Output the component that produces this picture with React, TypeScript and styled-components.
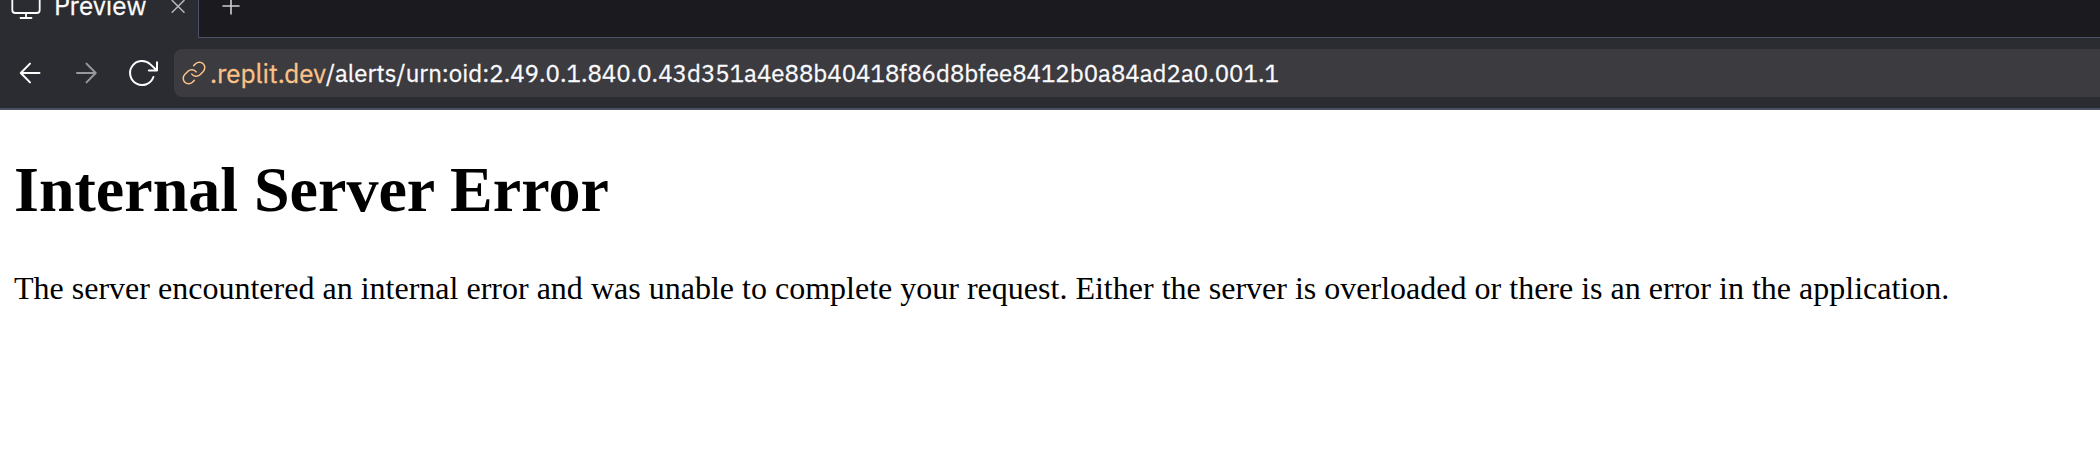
import React from "react";
import styled, { createGlobalStyle } from "styled-components";

const Global = createGlobalStyle`
  * { box-sizing: border-box; }
  body { margin: 0; background: #fff; overflow: hidden; }
`;
const Page = styled.div`height: 454px; display: flex; flex-direction: column;`;
const TabBar = styled.div`height: 38px; flex: none; display: flex; background: #2b2c31;`;
const Tab = styled.div`
  width: 198px; height: 38px; display: flex; align-items: flex-start; color: #fcfcfc;
  padding-left: 8px;
`;
const TabTitle = styled.span`
  width: 104px; margin: -10px 0 0 10px; font: 26px/30px "IBM Plex Sans", Roboto, sans-serif;
  -webkit-text-stroke: 0.3px currentColor;
`;
const TabStrip = styled.div`
  flex: 1; padding-left: 20px; background: #1b1b1f;
  border-left: 1px solid #4c5064; border-bottom: 1px solid #4c5064;
`;
const Toolbar = styled.div`
  height: 72px; flex: none; display: flex; align-items: flex-start;
  padding: 11px 0 0 14px; background: #2b2c31; border-bottom: 2px solid #4c5064;
`;
const NavButton = styled.button<{ $width: number; $dim?: boolean }>`
  width: ${(p) => p.$width}px; height: 48px; padding: 0; border: 0; background: none;
  display: flex; align-items: center; color: ${(p) => (p.$dim ? "#98989c" : "#fcfcfc")};
`;
const Address = styled.div`
  flex: 1; height: 48px; display: flex; align-items: center; padding-left: 7px;
  background: #3b3b40; border-radius: 8px 0 0 8px; color: #fafafc; white-space: nowrap;
  font: 24px/30px "IBM Plex Sans", Roboto, sans-serif;
  -webkit-text-stroke: 0.3px currentColor;
`;
const Host = styled.span`margin-left: 3px; color: #fcc288; font-size: 26px; letter-spacing: -0.1px;`;
const Path = styled.span`letter-spacing: 0.01px;`;
const Glyph = styled.svg<{ $stroke?: number }>`
  display: block; flex: none; fill: none; stroke: currentColor; stroke-width: ${(p) => p.$stroke ?? 2};
  stroke-linecap: round; stroke-linejoin: round; overflow: visible;
`;
const Body = styled.main`padding: 0 14px;`;
const Heading = styled.h1`margin: 43px 0 0; font: bold 64px/74px "Liberation Serif", serif; color: #000;`;
const Message = styled.p`margin: 43px 0 0; font: 32.02px/37px "Liberation Serif", serif; color: #000; white-space: nowrap;`;

export default function App() {
  return (
    <Page>
      <Global />
      <TabBar>
        <Tab>
          <Glyph width="36" height="20" $stroke={1.8}><path d="M4.3-6V10Q4.3 13 7.3 13H28.7Q31.7 13 31.7 10V-6M18 13V18M12.5 18H23.5" /></Glyph>
          <TabTitle>Preview</TabTitle>
          <Glyph width="32" height="20" color="#b4b4b8" $stroke={1.6}><path d="M14.2.5L26 12.2M26 .5L14.2 12.2" /></Glyph>
        </Tab>
        <TabStrip>
          <Glyph width="30" height="20" color="#d0d0d4" $stroke={1.6}><path d="M4 6H20M12-2V14" /></Glyph>
        </TabStrip>
      </TabBar>
      <Toolbar>
        <NavButton $width={56} aria-label="Back"><Glyph width="32" height="48"><path d="M25.5 24H7M16 14.6L6.8 24L16 33.4" /></Glyph></NavButton>
        <NavButton $width={54} $dim aria-label="Forward"><Glyph width="32" height="48"><path d="M7 24H25.5M16.5 14.6L25.7 24L16.5 33.4" /></Glyph></NavButton>
        <NavButton $width={50} aria-label="Reload"><Glyph width="40" height="48"><path d="M29.4 28A12 12 0 1 1 26.4 15.4L33 21.5M33 13.3V21.5H24.8" /></Glyph></NavButton>
        <Address>
          <Glyph width="26" height="26" viewBox="0 0 24 24" color="#fcc288" $stroke={1.4}>
            <path d="M10 13a5 5 0 0 0 7.54.54l3-3a5 5 0 0 0-7.07-7.07l-1.72 1.71M14 11a5 5 0 0 0-7.54-.54l-3 3a5 5 0 0 0 7.07 7.07l1.71-1.71" />
          </Glyph>
          <Host>.replit.dev</Host>
          <Path>/alerts/urn:oid:2.49.0.1.840.0.43d351a4e88b40418f86d8bfee8412b0a84ad2a0.001.1</Path>
        </Address>
      </Toolbar>
      <Body>
        <Heading>Internal Server Error</Heading>
        <Message>The server encountered an internal error and was unable to complete your request. Either the server is overloaded or there is an error in the application.</Message>
      </Body>
    </Page>
  );
}
